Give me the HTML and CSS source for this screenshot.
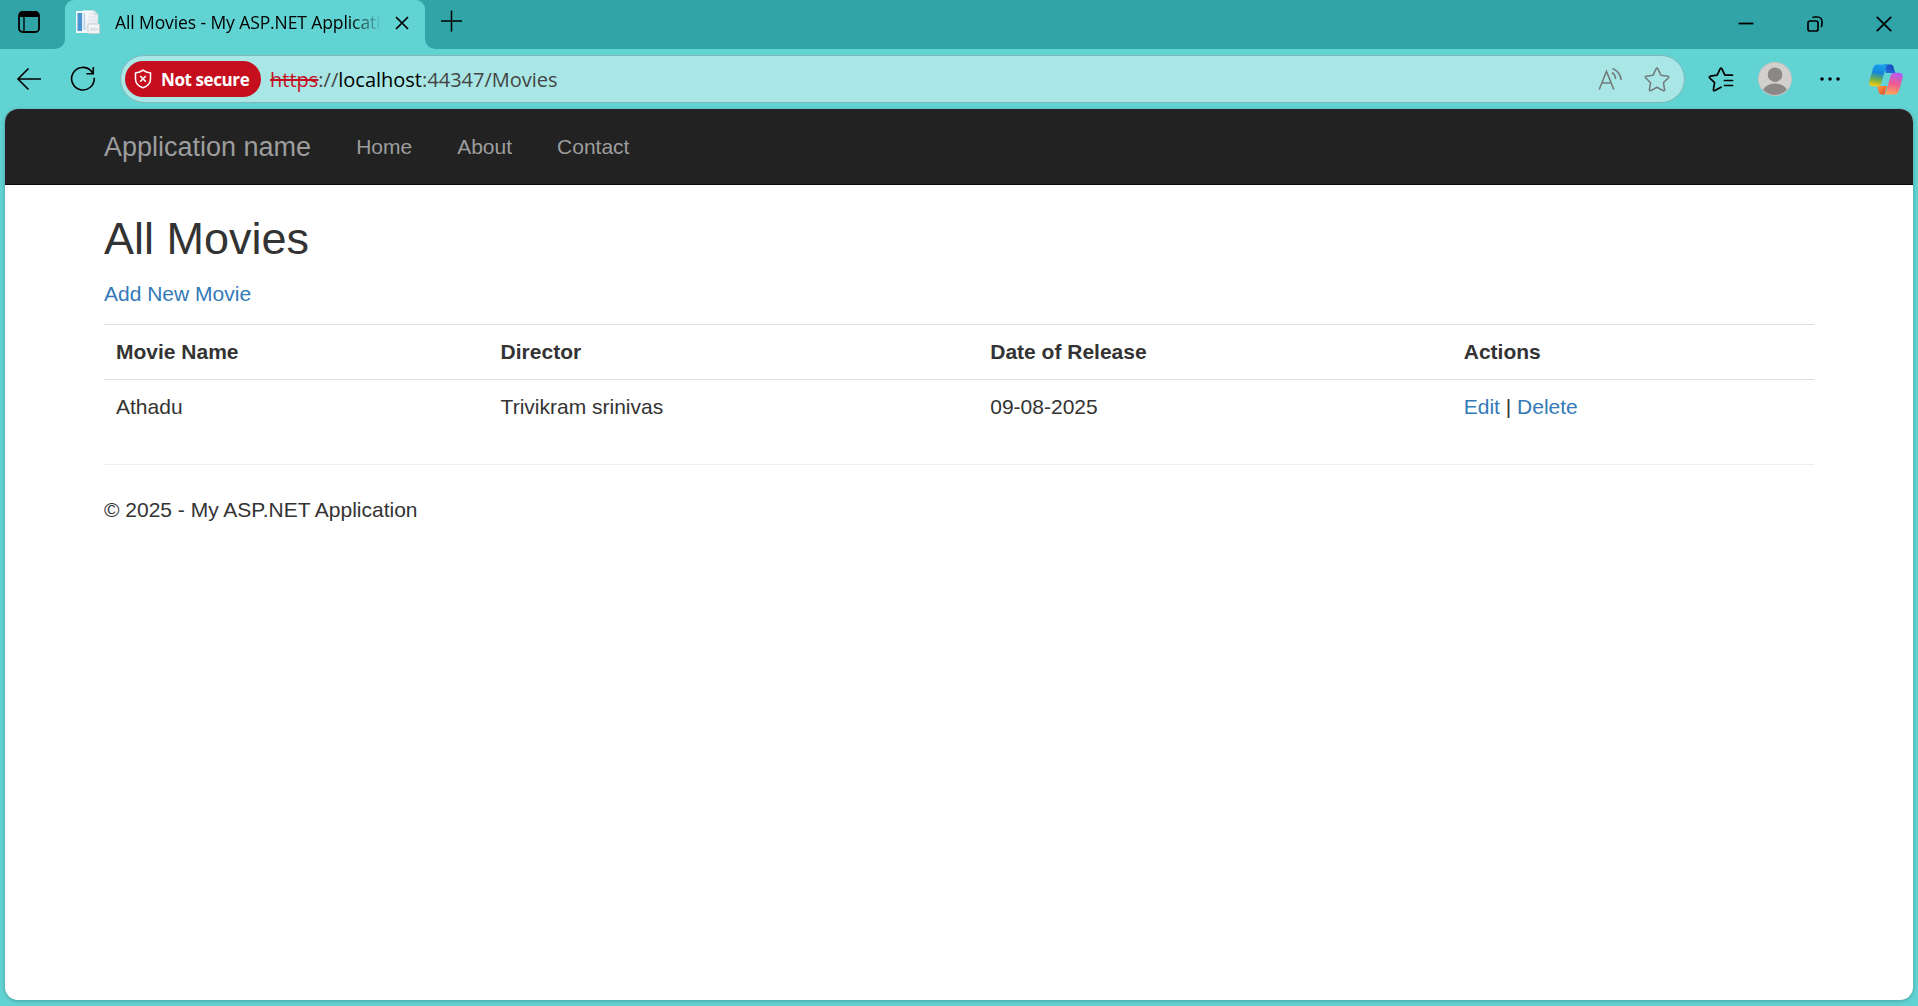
FILE: index.html
```html
<!DOCTYPE html>
<html lang="en">
<head>
<meta charset="utf-8">
<title>All Movies - My ASP.NET Application</title>
<link rel="stylesheet" href="styles.css">
</head>
<body>
<div class="browser">
  <div class="tab-strip">
    <div class="strip-start">
      <svg class="tab-menu" width="24" height="24" viewBox="0 0 24 24"><rect x="2" y="2" width="20" height="20" rx="3.5" fill="none" stroke="#000" stroke-width="1.8"/><path d="M2 7V5.500A3.500 3.500 0 0 1 5.500 2h13A3.500 3.500 0 0 1 22 5.500V7z"/><path d="M7 7v15" stroke="#000" stroke-width="1.400"/></svg>
    </div>
    <div class="tab-slot">
      <div class="tab">
        <svg class="favicon" width="24" height="24" viewBox="0 0 24 24">
          <defs><linearGradient id="paper" x1="0" y1="0" x2="1" y2="1"><stop offset="0" stop-color="#fff"/><stop offset="1" stop-color="#dfe3e8"/></linearGradient></defs>
          <rect x="0" y="1" width="14" height="22" fill="#f2f7fa"/><rect x="1.500" y="3" width="4.500" height="18" fill="#4a94d2"/>
          <path d="M7 .5h11l4 4V19H7z" fill="url(#paper)" stroke="#d2dce4" stroke-width=".6"/><path d="M18 .5v4h4" fill="#e6ebf0" stroke="#b9c8d2" stroke-width=".6"/>
          <path d="M8.500 3v17" stroke="#b7d3ea" stroke-width="1.500"/><path d="M12 4h4M12 7h8M12 10h8" stroke="#e0e6ec" stroke-width="1"/>
          <path d="M12 14h11.500v9.500H12z" fill="#f4f5f7" stroke="#bcc6ce" stroke-width=".8"/><path d="M14 17.500h8v3.500h-8z" fill="#dde2e8"/>
        </svg>
        <span class="tab-title">All Movies - My ASP.NET Application</span>
        <svg class="tab-close" width="14" height="14" viewBox="0 0 14 14"><path d="M1 1l12 12M13 1L1 13" stroke="#000" stroke-width="1.700"/></svg>
      </div>
    </div>
    <div class="strip-end">
      <svg class="new-tab" width="22" height="22" viewBox="0 0 22 22"><path d="M10.500 .5v21M0 11h21" stroke="#000" stroke-width="1.500"/></svg>
      <div class="window-controls">
        <svg width="16" height="16" viewBox="0 0 16 16"><path d="M.5 7.500h15" stroke="#000" stroke-width="1.800"/></svg>
        <svg width="16" height="16" viewBox="0 0 16 16" fill="none" stroke="#000" stroke-width="1.700"><rect x="1" y="5" width="10" height="10" rx="2"/><path d="M5.500 1.500C6 1 7 1 8 1h2.500A4.500 4.500 0 0 1 15 5.500V8c0 1.500-.3 2.500-1 3"/></svg>
        <svg width="16" height="16" viewBox="0 0 16 16"><path d="M.8.8l14.400 14.400M15.200.8L.8 15.200" stroke="#000" stroke-width="1.800"/></svg>
      </div>
    </div>
  </div>

  <div class="toolbar">
    <svg class="back" width="26" height="24" viewBox="0 0 26 24" fill="none" stroke="#000" stroke-width="1.600"><path d="M25 12H2M12.500 1.500L2 12l10.500 10.500"/></svg>
    <svg class="reload" width="26" height="26" viewBox="0 0 26 26" fill="none" stroke="#000" stroke-width="1.600"><path d="M24.200 11.800A11.300 11.300 0 1 1 21.400 5.200L23 7.500M23.300 1v6.700h-6.900"/></svg>
    <div class="address">
      <div class="warning">
        <svg width="18" height="20" viewBox="0 0 18 20" fill="none" stroke="#fff" stroke-width="1.500"><path d="M9 1.200C11 2.800 13.300 3.700 16.500 3.900V10c0 4.300-2.500 7-7.500 8.800C4 17 1.500 14.300 1.500 10V3.900C4.700 3.700 7 2.800 9 1.200z"/><path d="M6.200 7l5.600 5.600M11.800 7l-5.600 5.600"/></svg>
        <span class="warning-text">Not secure</span>
      </div>
      <span class="url"><span class="scheme">https</span>://<span class="host">localhost</span>:44347/Movies</span>
      <svg class="read-aloud" width="24" height="24" viewBox="0 0 24 24" fill="none" stroke="#737c7c" stroke-width="1.600"><path d="M1.200 22.500L8.500 4.500l7.300 18M4 16h9"/><path d="M14 5.500c2 1.300 3.200 3.500 3.700 6.500M14.500 1.500c4.700 1.800 8 5.500 8.700 11.500"/></svg>
      <svg class="star" width="26" height="25" viewBox="0 0 26 25" fill="none" stroke="#737c7c" stroke-width="1.600" stroke-linejoin="round"><path d="M12.100 1.900q.9-1.500 1.800 0l3 6.300 6.900 1q1.500.4.600 1.600l-5 4.900 1.200 6.900q0 1.600-1.500 1L13 20.300l-6.100 3.300q-1.500.6-1.500-1l1.200-6.900-5-4.900q-.9-1.200.6-1.600l6.900-1z"/></svg>
    </div>
    <svg class="favorites" width="26" height="25" viewBox="0 0 26 25" fill="none" stroke="#000" stroke-width="1.700" stroke-linecap="round" stroke-linejoin="round"><path d="M13 20.200l-6.100 3.400q-1.500.6-1.500-1l1.200-6.900-5-4.900q-.9-1.200.6-1.600l6.900-1 3-6.300q.9-1.500 1.800 0l3 6.300H24.500M16.500 13.500h8M16.500 18.500h8"/></svg>
    <svg class="profile" width="34" height="34" viewBox="0 0 34 34"><defs><clipPath id="disc"><circle cx="17" cy="17" r="16"/></clipPath></defs><circle cx="17" cy="17" r="17" fill="#c8c4c0"/><circle cx="17" cy="17" r="16" fill="#d2d0ce"/><g clip-path="url(#disc)" fill="#8a8886"><circle cx="17" cy="12.700" r="7.300"/><ellipse cx="17" cy="32" rx="13" ry="10.500"/></g></svg>
    <svg class="more" width="20" height="4" viewBox="0 0 20 4"><circle cx="2" cy="2" r="1.800"/><circle cx="10" cy="2" r="1.800"/><circle cx="18" cy="2" r="1.800"/></svg>
    <svg class="copilot" width="34" height="31" viewBox="0 0 34 31">
      <defs>
        <linearGradient id="cool" x1=".6" y1="0" x2=".45" y2="1"><stop offset="0" stop-color="#18a0f0"/><stop offset=".4" stop-color="#1787d8"/><stop offset=".7" stop-color="#6aae50"/><stop offset="1" stop-color="#f3cb10"/></linearGradient>
        <linearGradient id="warm" x1=".6" y1="0" x2=".4" y2="1"><stop offset="0" stop-color="#b25cf0"/><stop offset=".5" stop-color="#ef5c90"/><stop offset="1" stop-color="#ffa45a"/></linearGradient>
        <linearGradient id="navy" x1="1" y1="0" x2="0" y2="1"><stop offset="0" stop-color="#1238b8"/><stop offset="1" stop-color="#2379dc"/></linearGradient>
        <linearGradient id="ember" x1="0" y1="0" x2="1" y2="1"><stop offset="0" stop-color="#ff9f38"/><stop offset="1" stop-color="#e8442f"/></linearGradient>
      </defs>
      <path d="M15 .5h6.500c2 0 2.600 1.200 3.100 3l1.300 4.200c.4 1 1 1.300 2 1.300h-11z" fill="url(#navy)"/>
      <path d="M8 22h10l-2.500 8.500H13c-2 0-2.800-1-3.400-3z" fill="url(#ember)"/>
      <path d="M8.200.5h12c-1.800 0-2.700 1.200-3.300 3.200L12.300 19c-.7 2.200-1.900 3.200-4 3.200H4c-3 0-4.500-1.800-3.600-5.200L4.200 4C5 1.500 6.200.5 8.200.5z" fill="url(#cool)"/>
      <path d="M25.500 8.800H30c3 0 4.500 1.800 3.600 5.200L29.800 27c-.8 2.500-2 3.500-4 3.500H14c1.800 0 2.700-1.200 3.300-3.200L21.500 12c.7-2.200 1.900-3.200 4-3.200z" fill="url(#warm)"/>
    </svg>
  </div>

  <div class="page">
    <nav class="navbar">
      <div class="container navbar-inner">
        <a class="brand">Application name</a>
        <a class="nav-link">Home</a>
        <a class="nav-link">About</a>
        <a class="nav-link">Contact</a>
      </div>
    </nav>
    <main class="container">
      <h2 class="title">All Movies</h2>
      <p class="add"><a class="link">Add New Movie</a></p>
      <table class="movies">
        <tbody>
          <tr><th>Movie Name</th><th>Director</th><th>Date of Release</th><th>Actions</th></tr>
          <tr><td>Athadu</td><td>Trivikram srinivas</td><td>09-08-2025</td><td><a class="link">Edit</a> | <a class="link">Delete</a></td></tr>
        </tbody>
      </table>
      <hr class="rule">
      <footer><p class="copyright">© 2025 - My ASP.NET Application</p></footer>
    </main>
  </div>
</div>
</body>
</html>
```
FILE: styles.css
```css
* { box-sizing: border-box; }
body { margin: 0; }
svg { display: block; flex: none; }

.browser {
  height: 1006px;
  overflow: hidden;
  background: #62d3d3;
  font-family: "Open Sans", "Noto Sans", sans-serif;
  display: flex;
  flex-direction: column;
}

/* Tab strip */
.tab-strip { display: flex; height: 49px; flex: none; }
.strip-start {
  width: 65px;
  padding: 10px 0 0 17px;
  background: #30a4a7;
  border-bottom-right-radius: 10px;
}
.tab-slot { width: 360px; background: #30a4a7; }
.tab {
  height: 49px;
  display: flex;
  align-items: center;
  padding: 0 16px 5px 11px;
  background: #62d3d3;
  border-radius: 9px 9px 0 0;
}
.tab-title {
  width: 268px;
  margin: -1px 0 0 15px;
  overflow: hidden;
  white-space: nowrap;
  font-size: 17.5px;
  line-height: 26px;
  letter-spacing: -0.1px;
  color: #000;
  mask-image: linear-gradient(to right, #000 235px, transparent 267px);
}
.tab-close { margin: 2px 0 0 auto; }
.strip-end {
  flex: 1;
  display: flex;
  justify-content: space-between;
  padding: 10px 26px 0 16px;
  background: #30a4a7;
  border-bottom-left-radius: 10px;
}
.window-controls { display: flex; gap: 53px; padding-top: 5.5px; }

/* Toolbar */
.toolbar {
  height: 60px;
  flex: none;
  display: flex;
  align-items: center;
  padding: 0 15px 0 16px;
}
.reload { margin-left: 28px; }
.address {
  width: 1565px;
  height: 48px;
  margin-left: 24px;
  display: flex;
  align-items: center;
  padding: 0 14px 0 4px;
  border: 1px solid #80b9bb;
  border-radius: 24px;
  background: #a8e7e5;
}
.warning {
  width: 136px;
  height: 36px;
  display: flex;
  align-items: center;
  gap: 9px;
  padding-left: 9px;
  border-radius: 18px;
  background: #c50f1f;
  color: #fff;
}
.warning-text { font-size: 17px; font-weight: 700; letter-spacing: -0.4px; white-space: nowrap; }
.url { margin-left: 9px; font-size: 20px; color: #444; white-space: nowrap; }
.scheme { color: #c50f1f; text-decoration: line-through 2px; }
.host { color: #000; }
.read-aloud { margin-left: auto; }
.star { margin-left: 22px; }
.favorites { margin-left: 23px; }
.profile { margin-left: 24px; }
.more { margin-left: 28px; }
.copilot { margin-left: auto; }

/* Web page */
.page {
  height: 891px;
  margin: 0 5px;
  overflow: hidden;
  border-radius: 13px;
  background: #fff;
  box-shadow: 0 1px 4px rgba(0, 0, 0, .25);
  font-family: "Liberation Sans", Arial, sans-serif;
  font-size: 21px;
  line-height: 30px;
  color: #333;
}
.navbar { height: 76px; background: #222; border-bottom: 1px solid #080808; }
.container { width: 1755px; margin: 0 auto; padding: 0 22.5px; }
.navbar-inner { display: flex; color: #9d9d9d; }
.brand { padding: 22.5px 22.5px 22.5px 0; font-size: 27px; }
.nav-link { padding: 22.5px; }
.title { margin: 29px 0 15px; font-size: 45px; font-weight: 500; line-height: 49.5px; }
.add { margin: 0 0 15px; }
.link { color: #337ab7; }
.movies { width: 100%; margin-bottom: 30px; border-collapse: collapse; border-spacing: 0; }
.movies th, .movies td { padding: 12px; border-top: 1px solid #ddd; text-align: left; vertical-align: top; }
.rule { margin: 30px 0; border: 0; border-top: 1px solid #eee; }
.copyright { margin: 0 0 15px; }
```
